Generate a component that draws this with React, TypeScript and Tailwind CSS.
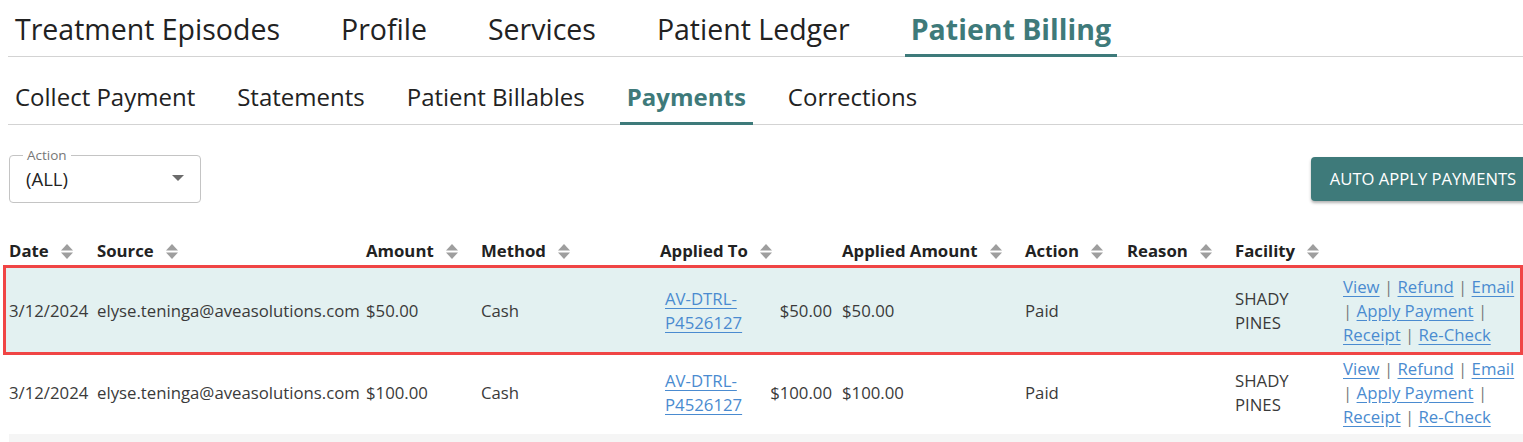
import type { ReactNode } from 'react';

const TEAL = '#3e7a7a';
const COLS =
  'grid grid-cols-[88px_269px_115px_179px_182px_183px_102px_108px_108px_179px] items-center';

const topTabs = ['Treatment Episodes', 'Profile', 'Services', 'Patient Ledger', 'Patient Billing'];
const subTabs = ['Collect Payment', 'Statements', 'Patient Billables', 'Payments', 'Corrections'];

const headers: { label: string; sort: boolean }[] = [
  { label: 'Date', sort: true },
  { label: 'Source', sort: true },
  { label: 'Amount', sort: true },
  { label: 'Method', sort: true },
  { label: 'Applied To', sort: true },
  { label: 'Applied Amount', sort: true },
  { label: 'Action', sort: true },
  { label: 'Reason', sort: true },
  { label: 'Facility', sort: true },
  { label: '', sort: false },
];

const payments = [
  { date: '3/12/2024', source: 'elyse.teninga@aveasolutions.com', amount: '$50.00', method: 'Cash', ref: 'AV-DTRL-P4526127', applied: '$50.00', action: 'Paid', facility: 'SHADY PINES' },
  { date: '3/12/2024', source: 'elyse.teninga@aveasolutions.com', amount: '$100.00', method: 'Cash', ref: 'AV-DTRL-P4526127', applied: '$100.00', action: 'Paid', facility: 'SHADY PINES' },
];

function SortIcon() {
  return (
    <svg width="14" height="17" viewBox="0 0 14 17" aria-hidden="true" className="shrink-0">
      <polygon points="1,7.5 7,1 13,7.5" fill="#9e9e9e" />
      <polygon points="1,9.5 7,16 13,9.5" fill="#9e9e9e" />
    </svg>
  );
}

function Link({ children }: { children: ReactNode }) {
  return <a className="cursor-pointer text-[#4a8bd0] underline underline-offset-[3px]">{children}</a>;
}

function Sep() {
  return <span className="text-[#7a7a7a]"> | </span>;
}

function Row({ p, selected }: { p: (typeof payments)[number]; selected: boolean }) {
  return (
    <div
      className={`${COLS} border-x-[3px] text-[16.75px] leading-[24px] text-[#3a3a3a] ${
        selected
          ? 'border-y-[3px] border-[#f04545] bg-[#e3f1f1] pb-[5px] pt-[7px]'
          : 'border-transparent bg-white pb-[5px] pt-[2px]'
      }`}
    >
      <div className="whitespace-nowrap pl-[3px]">{p.date}</div>
      <div className="whitespace-nowrap pl-[3px]">{p.source}</div>
      <div className="pl-[3px]">{p.amount}</div>
      <div className="pl-[3px]">{p.method}</div>
      <div className="flex items-center pl-[8px] pr-[7px]">
        <span className="w-[90px]">
          <Link>{p.ref}</Link>
        </span>
        <span className="ml-auto">{p.applied}</span>
      </div>
      <div className="pl-[3px]">{p.applied}</div>
      <div className="pl-[3px]">{p.action}</div>
      <div className="pl-[3px]" />
      <div className="max-w-[92px] pl-[3px]">{p.facility}</div>
      <div className="pl-[3px]">
        <Link>View</Link>
        <Sep />
        <Link>Refund</Link>
        <Sep />
        <Link>Email</Link>
        <Sep />
        <Link>Apply Payment</Link>
        <Sep />
        <Link>Receipt</Link>
        <Sep />
        <Link>Re-Check</Link>
      </div>
    </div>
  );
}

export default function App() {
  return (
    <div className="h-[442px] w-[1523px] overflow-hidden bg-white font-['Open_Sans',_'Noto_Sans',_sans-serif]">
      <div className="w-[1535px]">
        {/* primary tabs */}
        <div className="ml-[8px] flex gap-[49px] border-b border-[#d3d3d3] pl-[1px]">
          {topTabs.map((t) => {
            const active = t === 'Patient Billing';
            return (
              <div
                key={t}
                className={`-mb-px border-b-[3px] px-[6px] pb-[7px] pt-[11px] text-[28.5px] leading-[36px] ${
                  active ? 'border-[#3e7a7a] font-bold text-[#3e7a7a]' : 'border-transparent text-[#222]'
                }`}
              >
                {t}
              </div>
            );
          })}
        </div>

        {/* secondary tabs */}
        <div className="ml-[8px] flex gap-[28px] border-b border-[#d3d3d3]">
          {subTabs.map((t) => {
            const active = t === 'Payments';
            return (
              <div
                key={t}
                className={`-mb-px border-b-[3px] px-[7px] pb-[9px] pt-[24px] text-[24px] leading-[32px] ${
                  active ? 'border-[#3e7a7a] font-bold text-[#3e7a7a]' : 'border-transparent text-[#222]'
                }`}
              >
                {t}
              </div>
            );
          })}
        </div>

        {/* toolbar */}
        <div className="mt-[30px] flex items-center justify-between pl-[9px]">
          <div className="relative flex h-[48px] w-[192px] items-center rounded-[4px] border border-[#c4c4c4] pl-[16px] pr-[16px]">
            <span className="absolute left-[13px] top-[-10px] bg-white px-[4px] text-[13.5px] leading-[18px] text-[#777]">
              Action
            </span>
            <span className="text-[18.5px] leading-[24px] text-[#222]">(ALL)</span>
            <svg width="12" height="6" viewBox="0 0 12 6" className="ml-auto mt-[-2px]" aria-hidden="true">
              <polygon points="0,0 12,0 6,6" fill="#6b6b6b" />
            </svg>
          </div>
          <button
            type="button"
            className="h-[44px] w-[224px] rounded-[4px] text-[16.6px] uppercase text-white shadow-[0_2px_3px_rgba(0,0,0,0.3)]"
            style={{ backgroundColor: TEAL }}
          >
            Auto Apply Payments
          </button>
        </div>

        {/* table */}
        <div className="ml-[3px] mt-[29px] w-[1520px]">
          <div className={`${COLS} border-x-[3px] border-transparent pb-[2px] pt-[7px]`}>
            {headers.map((h, i) => (
              <div
                key={i}
                className="flex items-center gap-[11px] pl-[3px] text-[16.75px] font-bold leading-[24px] text-[#222]"
              >
                {h.label}
                {h.sort && <SortIcon />}
              </div>
            ))}
          </div>
          {payments.map((p, i) => (
            <Row key={i} p={p} selected={i === 0} />
          ))}
          <div className="ml-[6px] h-[30px] bg-[#f5f5f5]" />
        </div>
      </div>
    </div>
  );
}
